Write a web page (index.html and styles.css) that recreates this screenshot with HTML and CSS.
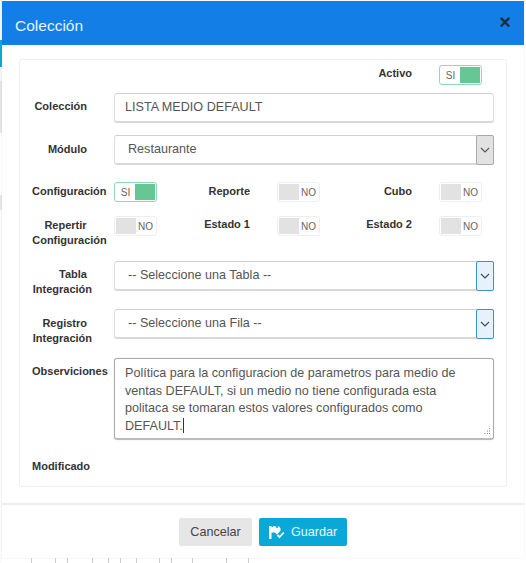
FILE: index.html
```html
<!DOCTYPE html>
<html lang="es">
<head>
  <meta charset="UTF-8">
  <title>Colección</title>
  <link rel="stylesheet" href="styles.css">
</head>
<body>

<div class="modal">
  <div class="modal-header">
    <h4>Colección</h4>
    <span class="close">&times;</span>
  </div>

  <div class="modal-body">
    <div class="panel">

      <div class="flags top">
        <span class="lbl col3">Activo</span>
        <div class="toggle on"><span>SI</span><i></i></div>
      </div>

      <div class="row first">
        <label class="name">Colección</label>
        <div class="input">LISTA MEDIO DEFAULT</div>
      </div>

      <div class="row modulo">
        <label class="name">Módulo</label>
        <div class="select">
          <span>Restaurante</span>
          <span class="arrow">
            <svg width="10" height="6" viewBox="0 0 10 6"><path d="M1 1l4 4 4-4" fill="none" stroke="#555" stroke-width="1.1"/></svg>
          </span>
        </div>
      </div>

      <div class="flags one">
        <span class="lbl">Configuración</span>
        <div class="toggle on"><span>SI</span><i></i></div>
        <span class="lbl col2">Reporte</span>
        <div class="toggle"><i></i><span>NO</span></div>
        <span class="lbl col3">Cubo</span>
        <div class="toggle"><i></i><span>NO</span></div>
      </div>

      <div class="flags two">
        <span class="lbl center"><span class="shift">Repertir</span><br>Configuración</span>
        <div class="toggle"><i></i><span>NO</span></div>
        <span class="lbl col2">Estado 1</span>
        <div class="toggle"><i></i><span>NO</span></div>
        <span class="lbl col3">Estado 2</span>
        <div class="toggle"><i></i><span>NO</span></div>
      </div>

      <div class="row tabla">
        <label class="name two-lines">Tabla<br><span>Integración</span></label>
        <div class="select focus">
          <span>-- Seleccione una Tabla --</span>
          <span class="arrow">
            <svg width="10" height="6" viewBox="0 0 10 6"><path d="M1 1l4 4 4-4" fill="none" stroke="#444" stroke-width="1.1"/></svg>
          </span>
        </div>
      </div>

      <div class="row registro">
        <label class="name two-lines">Registro<br><span>Integración</span></label>
        <div class="select focus">
          <span>-- Seleccione una Fila --</span>
          <span class="arrow">
            <svg width="10" height="6" viewBox="0 0 10 6"><path d="M1 1l4 4 4-4" fill="none" stroke="#444" stroke-width="1.1"/></svg>
          </span>
        </div>
      </div>

      <div class="row obs">
        <label class="name left">Observiciones</label>
        <div class="textarea">
          Política para la configuracion de parametros para medio de ventas DEFAULT, si un medio no tiene configurada esta politaca se tomaran estos valores configurados como DEFAULT.<b class="caret"></b>
          <svg class="grip" width="9" height="9" viewBox="0 0 9 9"><path d="M7 1h1v1H7zM5 3.500h1v1H5zM7 3.500h1v1H7zM2.500 6h1v1h-1zM5 6h1v1H5zM7 6h1v1H7z" fill="#888"/></svg>
        </div>
      </div>

      <div class="modified">Modificado</div>
    </div>
  </div>

  <div class="modal-footer">
    <button class="btn cancel" type="button">Cancelar</button>
    <button class="btn save" type="button">
      <svg width="16" height="13" viewBox="0 0 16 13"><path d="M0 0h2.500v1.500l2-1.300h2.500v1.600h2v-1.600h.8l1.700 2v2.600l-3.500 3.600-2.200-1.800H2.500V13H0z" fill="#fff"/><path d="M8.500 9l2 2 4.300-4.500" fill="none" stroke="#fff" stroke-width="1.800"/></svg>
      Guardar
    </button>
  </div>
</div>

<div class="ticks">
  <i style="width:32px"></i><i style="width:24px"></i><i style="width:12px"></i><i style="width:25px"></i><i style="width:16px"></i><i style="width:12px"></i><i style="width:16px"></i><i style="width:23px"></i><i style="width:12px"></i><i style="width:21px"></i><i style="width:34px"></i><i style="width:22px"></i>
</div>

</body>
</html>
```

FILE: styles.css
```css
html, body { margin: 0; height: 563px; overflow: hidden; }
body {
  font-family: "Liberation Sans", Arial, sans-serif;
  color: #444;
  background-color: #fff;
  background-image: linear-gradient(to bottom,
    #f4f4f4 0, #f4f4f4 40px,
    #12a8d4 40px, #12a8d4 67px,
    #f4f4f4 67px, #f4f4f4 81px,
    #e4e4e4 81px, #e4e4e4 133px,
    #fff 133px, #fff 195px,
    #e6e6e6 195px, #e6e6e6 210px,
    #fafafa 210px);
  background-size: 2px 100%;
  background-repeat: no-repeat;
}

.modal {
  width: 522px;
  height: 557px;
  margin: 1px 2px 0;
  background: #fff;
  box-shadow: 0 0 1px rgba(0, 0, 0, .15);
  display: flex;
  flex-direction: column;
}

.modal-header {
  height: 44px;
  background: #137ee6;
  display: flex;
  align-items: center;
  justify-content: space-between;
  padding: 0 13px 0 13px;
}
.modal-header h4 { margin: 5px 0 0; font-size: 15.500px; font-weight: 400; color: #e8f2fc; }
.close { font-size: 20px; font-weight: 700; color: #1f2d3a; line-height: 20px; margin-top: -2px; }

.modal-body { padding: 14px 17px 0; }
.panel {
  height: 428px;
  box-sizing: border-box;
  border: 1px solid #eee;
  border-radius: 3px;
  padding: 5px 12px 0 12px;
}

.flags {
  display: grid;
  grid-template-columns: 82px 43px 120px 43px 119px 43px;
  align-items: start;
}
.flags.top { grid-template-columns: 380px 43px; padding-left: 27px; }
.flags.top .lbl { padding-right: 27px; text-align: right; }
.flags.one { margin-top: 17px; }
.flags.two { margin-top: 14px; }

.lbl, .name {
  font-size: 11px;
  font-weight: 700;
  color: #333;
  line-height: 15px;
  padding-top: 1px;
  white-space: nowrap;
}
.flags.one .lbl { padding-top: 2px; }
.lbl.col2, .lbl.col3 { text-align: right; padding-right: 27px; }
.lbl.center { text-align: center; padding: 2px 7px 0 0; }
.lbl .shift { display: inline-block; margin-right: 8px; }

.toggle {
  height: 20px;
  box-sizing: border-box;
  border: 1px solid #eee;
  border-radius: 3px;
  padding: 1px;
  display: flex;
  align-items: center;
  font-size: 10px;
  color: #666;
  background: #fff;
}
.toggle i { width: 20px; height: 16px; background: #e2e2e2; }
.toggle span { flex: 1; text-align: center; }
.toggle.on { border-color: #8fdab4; }
.toggle.on i { background: #66c795; }

.row { display: flex; align-items: flex-start; }
.row.first { margin-top: 8px; }
.row + .row { margin-top: 12px; }
.row.tabla { margin-top: 13px; }
.row.registro { margin-top: 12px; }
.row.obs { margin-top: 12px; }

.name {
  width: 75px;
  margin-right: 7px;
  padding-right: 20px;
  box-sizing: border-box;
  text-align: right;
  padding-top: 6px;
}
.modulo .name { padding-top: 7px; }
.registro .name { padding-top: 7px; }
.name.two-lines span { margin-right: -5px; }
.name.left { text-align: left; padding: 6px 0 0; overflow: visible; }

.input, .select, .textarea {
  width: 380px;
  box-sizing: border-box;
  background: #fff;
  border: 1px solid #ddd;
  border-top-color: #d0d0d0;
  border-bottom: 2px solid #d8d8d8;
  border-radius: 3px;
  font-size: 12.600px;
  color: #555;
}
.input { height: 30px; line-height: 27px; padding-left: 10px; }
.select {
  height: 30px;
  display: flex;
  justify-content: space-between;
  line-height: 27px;
  padding-left: 13px;
}
.arrow {
  width: 16px;
  background: #e2e2e2;
  border: 1px solid #aaa;
  border-radius: 2px;
  margin: -1px -1px -2px 0;
  display: flex;
  align-items: center;
  justify-content: center;
}
.select.focus .arrow { background: #e6f1fb; border-color: #3d8fd8; }

.textarea {
  position: relative;
  height: 82px;
  border: 1px solid #aaa;
  border-bottom: 2px solid #bbb;
  padding: 6px 10px;
  line-height: 17.500px;
  box-shadow: 0 0 2px rgba(0, 0, 0, .1);
}
.caret { display: inline-block; width: 1px; height: 15px; background: #333; vertical-align: -3px; }
.grip { position: absolute; right: 2px; bottom: 2px; }

.modified {
  margin-top: 20px;
  font-size: 11px;
  font-weight: 700;
  color: #333;
}

.modal-footer {
  margin-top: 16px;
  border-top: 2px solid #eee;
  padding-top: 13px;
  display: flex;
  justify-content: flex-start;
  padding-left: 177px;
  gap: 7px;
}
.btn {
  height: 28px;
  border: none;
  border-radius: 2px;
  font-family: inherit;
  font-size: 12.600px;
  cursor: pointer;
}
.cancel { width: 73px; background: #e6e6e6; color: #444; }
.save {
  width: 88px;
  background: #0aa8d6;
  color: #e8f7fb;
  display: flex;
  align-items: center;
  justify-content: center;
  gap: 6px;
}

.ticks { display: flex; height: 5px; }
.ticks i { display: block; box-sizing: border-box; height: 5px; border-right: 1px solid #ccc; }
```
